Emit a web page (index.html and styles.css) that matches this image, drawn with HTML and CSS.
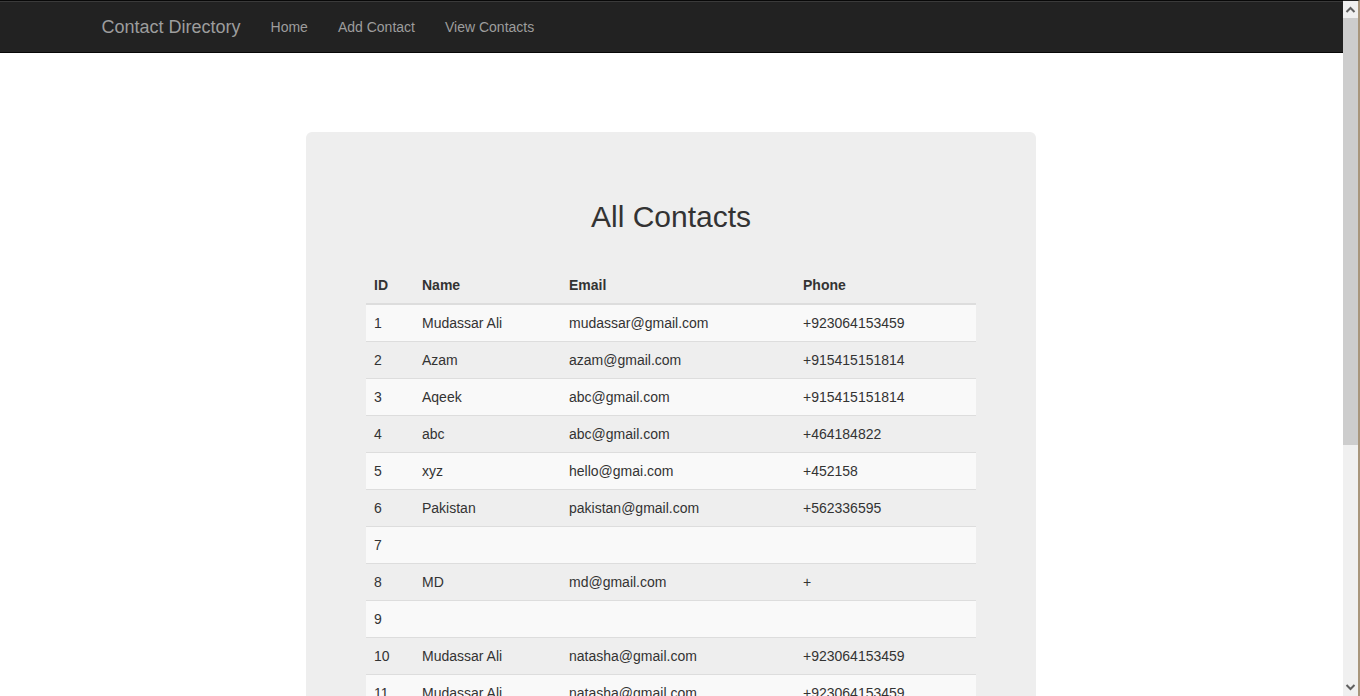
FILE: index.html
```html
<!DOCTYPE html>
<html>
<head>
<meta charset="utf-8">
<title>Contact Directory</title>
<link rel="stylesheet" href="styles.css">
</head>
<body>
<div class="page">
  <nav class="navbar">
    <div class="container nav-inner">
      <a class="brand" href="#">Contact Directory</a>
      <ul class="nav">
        <li><a href="#">Home</a></li>
        <li><a href="#">Add Contact</a></li>
        <li><a href="#">View Contacts</a></li>
      </ul>
    </div>
  </nav>
  <div class="jumbotron">
    <h2 class="title">All Contacts</h2>
    <table class="table">
      <colgroup>
        <col class="c-id"><col class="c-name"><col class="c-email"><col class="c-phone">
      </colgroup>
      <thead>
        <tr><th>ID</th><th>Name</th><th>Email</th><th>Phone</th></tr>
      </thead>
      <tbody>
        <tr><td>1</td><td>Mudassar Ali</td><td>mudassar@gmail.com</td><td>+923064153459</td></tr>
        <tr><td>2</td><td>Azam</td><td>azam@gmail.com</td><td>+915415151814</td></tr>
        <tr><td>3</td><td>Aqeek</td><td>abc@gmail.com</td><td>+915415151814</td></tr>
        <tr><td>4</td><td>abc</td><td>abc@gmail.com</td><td>+464184822</td></tr>
        <tr><td>5</td><td>xyz</td><td>hello@gmai.com</td><td>+452158</td></tr>
        <tr><td>6</td><td>Pakistan</td><td>pakistan@gmail.com</td><td>+562336595</td></tr>
        <tr><td>7</td><td></td><td></td><td></td></tr>
        <tr><td>8</td><td>MD</td><td>md@gmail.com</td><td>+</td></tr>
        <tr><td>9</td><td></td><td></td><td></td></tr>
        <tr><td>10</td><td>Mudassar Ali</td><td>natasha@gmail.com</td><td>+923064153459</td></tr>
        <tr><td>11</td><td>Mudassar Ali</td><td>natasha@gmail.com</td><td>+923064153459</td></tr>
        <tr><td>12</td><td>Mudassar Ali</td><td>natasha@gmail.com</td><td>+923064153459</td></tr>
      </tbody>
    </table>
  </div>
</div>
<div class="scrollbar">
  <div class="sb-btn">
    <svg width="15" height="17" viewBox="0 0 15 17"><polyline points="3.5,11 7.5,7 11.5,11" fill="none" stroke="#606060" stroke-width="2"/></svg>
  </div>
  <div class="sb-thumb"></div>
  <div class="sb-track"></div>
  <div class="sb-btn">
    <svg width="15" height="17" viewBox="0 0 15 17"><polyline points="3.5,6 7.5,10 11.5,6" fill="none" stroke="#606060" stroke-width="2"/></svg>
  </div>
</div>
</body>
</html>
```

FILE: styles.css
```css
html, body {
  margin: 0;
  padding: 0;
  height: 696px;
  overflow: hidden;
}
body {
  display: flex;
  font-family: "Liberation Sans", Arial, Helvetica, sans-serif;
  font-size: 14px;
  line-height: 20px;
  color: #333;
  background: #fff;
}
.page {
  flex: 1;
  height: 696px;
  overflow: hidden;
  padding-right: 1px;
  box-sizing: border-box;
}
.navbar {
  background: #222;
  border-top: 1px solid #080808;
  box-shadow: inset 0 1px 0 #3a3a3a;
  padding-top: 1px;
  height: 50px;
  border-bottom: 1px solid #080808;
  margin-right: -1px;
}
.container {
  width: 1170px;
  margin: 0 auto;
  padding: 0 15px;
  box-sizing: border-box;
}
.nav-inner {
  display: flex;
  align-items: stretch;
}
.brand {
  display: block;
  margin-left: -15px;
  padding: 15px 15px;
  font-size: 18px;
  line-height: 20px;
  color: #9d9d9d;
  text-decoration: none;
}
.nav {
  display: flex;
  list-style: none;
  margin: 0;
  padding: 0;
}
.nav a {
  display: block;
  padding: 15px;
  color: #9d9d9d;
  text-decoration: none;
  line-height: 20px;
}
.jumbotron {
  width: 730px;
  box-sizing: border-box;
  margin: 79px auto 0;
  padding: 48px 60px;
  background: #eee;
  border-radius: 6px;
}
.title {
  margin: 20px 0 10px;
  font-size: 30px;
  font-weight: 500;
  line-height: 33px;
  text-align: center;
  color: #333;
}
.table {
  width: 610px;
  margin-top: 34px;
  border-collapse: collapse;
  border-spacing: 0;
  table-layout: fixed;
}
.c-id { width: 48px; }
.c-name { width: 147px; }
.c-email { width: 234px; }
.c-phone { width: 181px; }
.table th {
  text-align: left;
  font-weight: bold;
  padding: 8px;
  line-height: 20px;
  border-bottom: 2px solid #ddd;
}
.table td {
  padding: 8px;
  line-height: 20px;
  height: 20px;
  border-top: 1px solid #ddd;
}
.table tbody tr:first-child td {
  border-top: 0;
}
.table tbody tr:nth-child(odd) {
  background: #f9f9f9;
}
.scrollbar {
  width: 15px;
  height: 695px;
  border-top: 1px solid #222;
  border-right: 2px solid #a8967c;
  background: #f0f0f0;
  display: flex;
  flex-direction: column;
}
.sb-btn {
  height: 17px;
  flex: none;
  background: #f0f0f0;
}
.sb-btn svg {
  display: block;
}
.sb-thumb {
  height: 427px;
  flex: none;
  background: #cdcdcd;
}
.sb-track {
  flex: 1;
}
```
